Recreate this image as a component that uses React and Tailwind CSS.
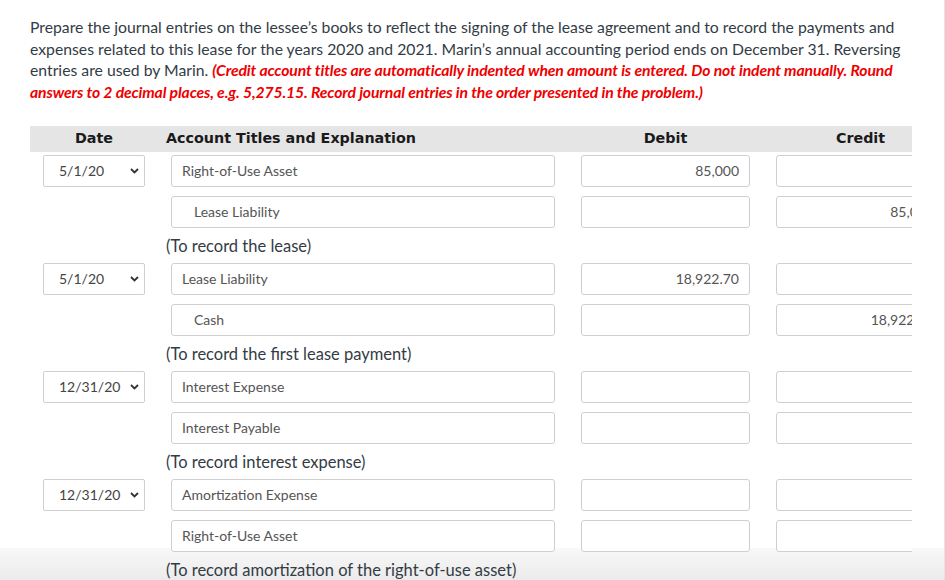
import React from 'react'

const entries = [
  {
    date: '5/1/20',
    rows: [
      { acct: 'Right-of-Use Asset', debit: '85,000', credit: '' },
      { acct: 'Lease Liability', debit: '', credit: '85,000', indent: true },
    ],
    note: '(To record the lease)',
  },
  {
    date: '5/1/20',
    rows: [
      { acct: 'Lease Liability', debit: '18,922.70', credit: '' },
      { acct: 'Cash', debit: '', credit: '18,922.70', indent: true },
    ],
    note: '(To record the first lease payment)',
  },
  {
    date: '12/31/20',
    rows: [
      { acct: 'Interest Expense', debit: '', credit: '' },
      { acct: 'Interest Payable', debit: '', credit: '' },
    ],
    note: '(To record interest expense)',
  },
  {
    date: '12/31/20',
    rows: [
      { acct: 'Amortization Expense', debit: '', credit: '' },
      { acct: 'Right-of-Use Asset', debit: '', credit: '' },
    ],
    note: '(To record amortization of the right-of-use asset)',
  },
]

const cols = 'grid grid-cols-[102px_384px_169px_169px] gap-x-[26px] pl-[13px] w-[915px]'

function Chevron() {
  return (
    <svg width="9" height="6" viewBox="0 0 9 6" className="shrink-0">
      <path d="M1 1 L4.5 4.5 L8 1" fill="none" stroke="#333" strokeWidth="1.8" />
    </svg>
  )
}

function Box({ children, className = '' }) {
  return (
    <div
      className={`h-[32px] border border-[#cfcfcf] rounded-[3px] bg-white flex items-center text-[14px] text-[#555] whitespace-nowrap ${className}`}
    >
      {children}
    </div>
  )
}

export default function App() {
  return (
    <div
      className="relative w-[945px] h-[580px] overflow-hidden bg-white border-r border-[#e3e3e3]"
      style={{ fontFamily: 'Lato, "Open Sans", sans-serif' }}
    >
      <div className="absolute left-0 right-0 bottom-0 h-[32px] bg-gradient-to-b from-[#f8f8f8] to-[#ebebeb]" />
      <div className="relative pl-[30px] pr-[40px] pt-[16px]">
        <p className="text-[15.75px] leading-[21.7px] text-[#333c45]">
          Prepare the journal entries on the lessee’s books to reflect the signing of the lease agreement and to record the payments and
          expenses related to this lease for the years 2020 and 2021. Marin’s annual accounting period ends on December 31. Reversing
          entries are used by Marin.{' '}
          <span className="font-bold italic text-[#ee0000] tracking-[-0.14px]">
            (Credit account titles are automatically indented when amount is entered. Do not indent manually. Round answers to 2 decimal
            places, e.g. 5,275.15. Record journal entries in the order presented in the problem.)
          </span>
        </p>
      </div>

      <div className="relative ml-[30px] mt-[23px] w-[882px] overflow-hidden">
        <div
          className={`${cols} h-[26px] items-center bg-[#e5e5e5] font-bold text-[14.3px] text-[#1a1a1a]`}
          style={{ fontFamily: 'Verdana, "DejaVu Sans", sans-serif' }}
        >
          <div className="text-center">Date</div>
          <div className="-ml-[5px]">Account Titles and Explanation</div>
          <div className="text-center">Debit</div>
          <div className="text-center">Credit</div>
        </div>

        <div className="pt-[3px]">
          {entries.map((e, i) => (
            <div key={i}>
              {e.rows.map((r, j) => (
                <div key={j} className={`${cols} ${j > 0 ? 'mt-[9px]' : ''}`}>
                  {j === 0 ? (
                    <div className="h-[32px] border border-[#cfcfcf] rounded-[2px] bg-white flex items-center justify-between pl-[15px] pr-[5px] text-[14px] text-[#444]">
                      <span>{e.date}</span>
                      <Chevron />
                    </div>
                  ) : (
                    <div />
                  )}
                  <Box className={r.indent ? 'pl-[22px]' : 'pl-[10px]'}>{r.acct}</Box>
                  <Box className="justify-end pr-[10px]">{r.debit}</Box>
                  <Box className="justify-end pr-[10px]">{r.credit}</Box>
                </div>
              ))}
              <div className={cols}>
                <div />
                <div className="col-span-3 h-[35px] pt-[3px] flex items-center -ml-[5px] text-[16.5px] text-[#333c45]">{e.note}</div>
              </div>
            </div>
          ))}
        </div>
      </div>
    </div>
  )
}
